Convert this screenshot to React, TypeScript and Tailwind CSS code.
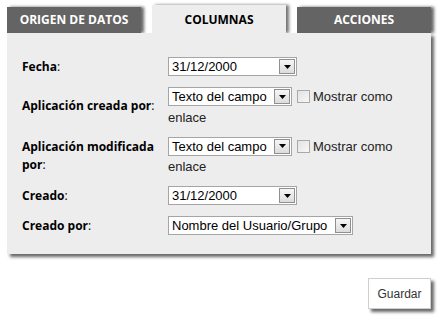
import React from "react";

const labelFont = "font-['Open_Sans',sans-serif]";
const fieldFont = "font-['Liberation_Sans',Arial,sans-serif]";

function DropArrow() {
  return (
    <span className="flex h-[15px] w-[16px] shrink-0 items-center justify-center border border-[#8f8f8f] bg-gradient-to-b from-[#f6f6f6] to-[#dcdcdc]">
      <svg width="7" height="4" viewBox="0 0 7 4">
        <path d="M0 0h7L3.5 4z" fill="#000" />
      </svg>
    </span>
  );
}

function FakeSelect({ value, width }: { value: string; width: string }) {
  return (
    <div
      className={`flex h-[19px] items-center justify-between border border-[#a5a5a5] bg-white pl-[3px] pr-[1px] ${width}`}
    >
      <span className={`${fieldFont} text-[13px] leading-none text-black whitespace-nowrap`}>
        {value}
      </span>
      <DropArrow />
    </div>
  );
}

function LinkOption() {
  return (
    <div className="flex flex-col gap-[2px]">
      <div className="flex items-center">
        <FakeSelect value="Texto del campo" width="w-[124px]" />
        <span className="ml-[5px] h-[13px] w-[13px] border border-[#a9a9a9] bg-gradient-to-br from-[#e3e3e3] to-[#f7f7f7]" />
        <span className={`${fieldFont} ml-[3px] text-[13px] text-[#222]`}>Mostrar como</span>
      </div>
      <span className={`${fieldFont} text-[13px] leading-[17px] text-[#222]`}>enlace</span>
    </div>
  );
}

function Label({ text }: { text: string }) {
  return (
    <div className={`${labelFont} text-[12px] leading-[18px] text-black`}>
      <span className="font-bold">{text}</span>:
    </div>
  );
}

export default function App() {
  const tabs = [
    { name: "ORIGEN DE DATOS", active: false },
    { name: "COLUMNAS", active: true },
    { name: "ACCIONES", active: false },
  ];

  return (
    <div className="h-[316px] w-[442px] bg-white pl-[7px] pt-[5px]">
      <div className="flex h-[28px] w-[424px] items-end gap-[11px]">
        {tabs.map((tab) =>
          tab.active ? (
            <div
              key={tab.name}
              className={`${labelFont} flex h-[28px] w-[134px] items-center justify-center bg-[#ededed] pt-[1px] text-[12px] font-bold text-black shadow-[3px_0_3px_rgba(0,0,0,0.55)]`}
            >
              {tab.name}
            </div>
          ) : (
            <div
              key={tab.name}
              className={`${labelFont} flex h-[26px] w-[134px] items-center justify-center bg-[#646464] text-[12px] font-bold text-white shadow-[3px_0_3px_rgba(0,0,0,0.6)]`}
            >
              {tab.name}
            </div>
          ),
        )}
      </div>

      <div className="relative w-[424px] bg-[#ededed] pb-[19px] pl-[15px] pt-[24px] shadow-[3px_3px_3px_rgba(0,0,0,0.6)]">
        <div className="grid grid-cols-[146px_1fr] items-center gap-y-[11px]">
          <Label text="Fecha" />
          <FakeSelect value="31/12/2000" width="w-[129px]" />

          <Label text="Aplicación creada por" />
          <LinkOption />

          <Label text="Aplicación modificada por" />
          <LinkOption />

          <Label text="Creado" />
          <FakeSelect value="31/12/2000" width="w-[129px]" />

          <Label text="Creado por" />
          <FakeSelect value="Nombre del Usuario/Grupo" width="w-[185px]" />
        </div>
      </div>

      <div className="flex w-[424px] justify-end pt-[24px]">
        <button
          type="button"
          className={`${fieldFont} h-[31px] w-[63px] border border-[#cfcfcf] bg-white text-[12px] text-[#333] shadow-[3px_3px_3px_rgba(0,0,0,0.6)]`}
        >
          Guardar
        </button>
      </div>
    </div>
  );
}
